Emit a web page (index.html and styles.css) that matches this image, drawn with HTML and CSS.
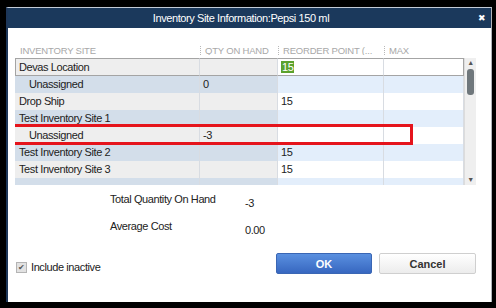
FILE: index.html
```html
<!DOCTYPE html>
<html lang="en">
<head>
  <meta charset="UTF-8" />
  <title>Inventory Site Information</title>
  <link rel="stylesheet" href="styles.css">
</head>
<body>

  <div class="window">
    <div class="titlebar">
      <span class="title">Inventory Site Information:Pepsi 150 ml</span>
      <span class="close">&#10006;</span>
    </div>

    <div class="content">
      <!-- column headers -->
      <div class="head">
        <div class="hcell">INVENTORY SITE</div>
        <div class="hcell sep">QTY ON HAND</div>
        <div class="hcell sep">REORDER POINT (...</div>
        <div class="hcell sep">MAX</div>
      </div>

      <div class="grid">
        <div class="rows">
          <div class="row odd focus">
            <div class="cell">Devas Location</div>
            <div class="cell"></div>
            <div class="cell edit"><span class="selected">15</span></div>
            <div class="cell edit"></div>
          </div>
          <div class="row even">
            <div class="cell sub">Unassigned</div>
            <div class="cell">0</div>
            <div class="cell edit"></div>
            <div class="cell edit"></div>
          </div>
          <div class="row odd">
            <div class="cell">Drop Ship</div>
            <div class="cell"></div>
            <div class="cell edit">15</div>
            <div class="cell edit"></div>
          </div>
          <div class="row even">
            <div class="cell">Test Inventory Site 1</div>
            <div class="cell"></div>
            <div class="cell edit"></div>
            <div class="cell edit"></div>
          </div>
          <div class="row odd">
            <div class="cell sub">Unassigned</div>
            <div class="cell">-3</div>
            <div class="cell edit"></div>
            <div class="cell edit"></div>
          </div>
          <div class="row even">
            <div class="cell">Test Inventory Site 2</div>
            <div class="cell"></div>
            <div class="cell edit">15</div>
            <div class="cell edit"></div>
          </div>
          <div class="row odd">
            <div class="cell">Test Inventory Site 3</div>
            <div class="cell"></div>
            <div class="cell edit">15</div>
            <div class="cell edit"></div>
          </div>
          <div class="row even">
            <div class="cell"></div>
            <div class="cell"></div>
            <div class="cell edit"></div>
            <div class="cell edit"></div>
          </div>

          <!-- annotation box round the negative row -->
          <div class="highlight"></div>
        </div>

        <div class="scrollbar">
          <span class="arrow">&#9650;</span>
          <span class="thumb"></span>
          <span class="fill"></span>
          <span class="arrow">&#9660;</span>
        </div>
      </div>

      <div class="summary">
        <div class="line">
          <span class="label">Total Quantity On Hand</span>
          <span class="value">-3</span>
        </div>
        <div class="line">
          <span class="label">Average Cost</span>
          <span class="value">0.00</span>
        </div>
      </div>

      <div class="footer">
        <label class="check">
          <span class="box">&#10004;</span>
          Include inactive
        </label>
        <div class="buttons">
          <button class="btn ok">OK</button>
          <button class="btn cancel">Cancel</button>
        </div>
      </div>
    </div>
  </div>

</body>
</html>
```

FILE: styles.css
```css
html, body {
  margin: 0;
  background: #000;
}
body {
  width: 496px;
  height: 308px;
  overflow: hidden;
  font-family: "Liberation Sans", Arial, sans-serif;
  font-size: 11px;
  letter-spacing: -0.4px;
  color: #222;
}
.window {
  margin: 7px 4px 0 6px;
  height: 294px;
  background: #fff;
  border-top: 1px solid #c4ccd8;
  border-left: 2px solid #1d3658;
  border-right: 1px solid #b0b4ba;
  display: flex;
  flex-direction: column;
}
.titlebar {
  height: 20px;
  background: #1b395c;
  color: #fff;
  display: flex;
  align-items: center;
}
.title {
  flex: 1;
  text-align: center;
  font-size: 11px;
}
.close {
  width: 16px;
  font-size: 9px;
  text-align: center;
  margin-right: 1px;
}
.content {
  padding: 16px 15px 0 7px;
}

/* grid */
.head, .row {
  display: grid;
  grid-template-columns: 185px 78px 106px 80px;
}
.head {
  height: 14px;
  line-height: 14px;
  font-size: 9.5px;
  letter-spacing: -0.2px;
  color: #a8a8a8;
}
.hcell {
  padding-left: 5px;
  white-space: nowrap;
  overflow: hidden;
}
.hcell.sep {
  border-left: 1px dotted #b8b8b8;
  padding-left: 4px;
  height: 9px;
  line-height: 9px;
  margin-top: 2px;
}
.grid {
  display: flex;
  height: 127px;
}
.rows {
  position: relative;
  width: 449px;
  overflow: hidden;
}
.row {
  height: 17px;
  line-height: 17px;
}
.cell {
  padding: 0 3px;
  border-right: 1px solid #d8dce2;
  white-space: nowrap;
}
.cell:first-child {
  padding-left: 4px;
}
.cell.sub {
  padding-left: 14px;
}
.odd .cell {
  background: #eeeeee;
}
.odd .cell.edit {
  background: #fff;
}
.even .cell {
  background: #d3deea;
}
.even .cell.edit {
  background: #e3eefb;
}
.row.focus {
  height: 18px;
}
.row.focus .cell {
  border-top: 1px solid #a4a4a4;
  border-bottom: 1px solid #a4a4a4;
  line-height: 16px;
}
.row.focus .cell:first-child {
  border-left: 1px solid #a4a4a4;
  padding-left: 3px;
}
.row.focus .cell:last-child {
  border-right: 1px solid #a4a4a4;
}
.selected {
  background: #5ba22d;
  color: #fff;
  padding: 0 1px;
}
.highlight {
  position: absolute;
  left: -3px;
  top: 66px;
  width: 395px;
  height: 15px;
  border: 3px solid #e5141c;
}

/* scrollbar */
.scrollbar {
  width: 11px;
  background: #efefef;
  border-left: 1px solid #dcdcdc;
  display: flex;
  flex-direction: column;
  align-items: center;
}
.arrow {
  font-size: 7px;
  line-height: 10px;
  color: #555;
}
.thumb {
  width: 7px;
  height: 26px;
  background: #6f777c;
  border-radius: 3px;
  margin-top: 1px;
}
.fill {
  flex: 1;
}

/* totals */
.summary {
  margin-top: 7px;
  padding-left: 95px;
}
.line {
  display: flex;
  height: 27px;
}
.label {
  width: 135px;
  line-height: 14px;
}
.value {
  line-height: 14px;
  margin-top: 4px;
}

/* footer */
.footer {
  display: flex;
  justify-content: space-between;
  align-items: flex-end;
  margin-top: 7px;
}
.check {
  display: flex;
  align-items: center;
  margin-left: 1px;
  line-height: 14px;
}
.box {
  width: 9px;
  height: 9px;
  border: 1px solid #b4b4b4;
  background: #e2e2e2;
  color: #555;
  font-size: 8px;
  line-height: 9px;
  text-align: center;
  margin-right: 4px;
}
.buttons {
  display: flex;
  gap: 7px;
}
.btn {
  height: 21px;
  font-family: "Liberation Sans", Arial, sans-serif;
  font-size: 11px;
  font-weight: bold;
  border-radius: 2px;
  padding: 0;
}
.ok {
  width: 96px;
  background: linear-gradient(#5a90e0, #3767c0);
  border: 1px solid #3a66b4;
  color: #fff;
}
.cancel {
  width: 97px;
  background: linear-gradient(#ffffff, #ececec);
  border: 1px solid #cfcfcf;
  color: #333;
}
```
